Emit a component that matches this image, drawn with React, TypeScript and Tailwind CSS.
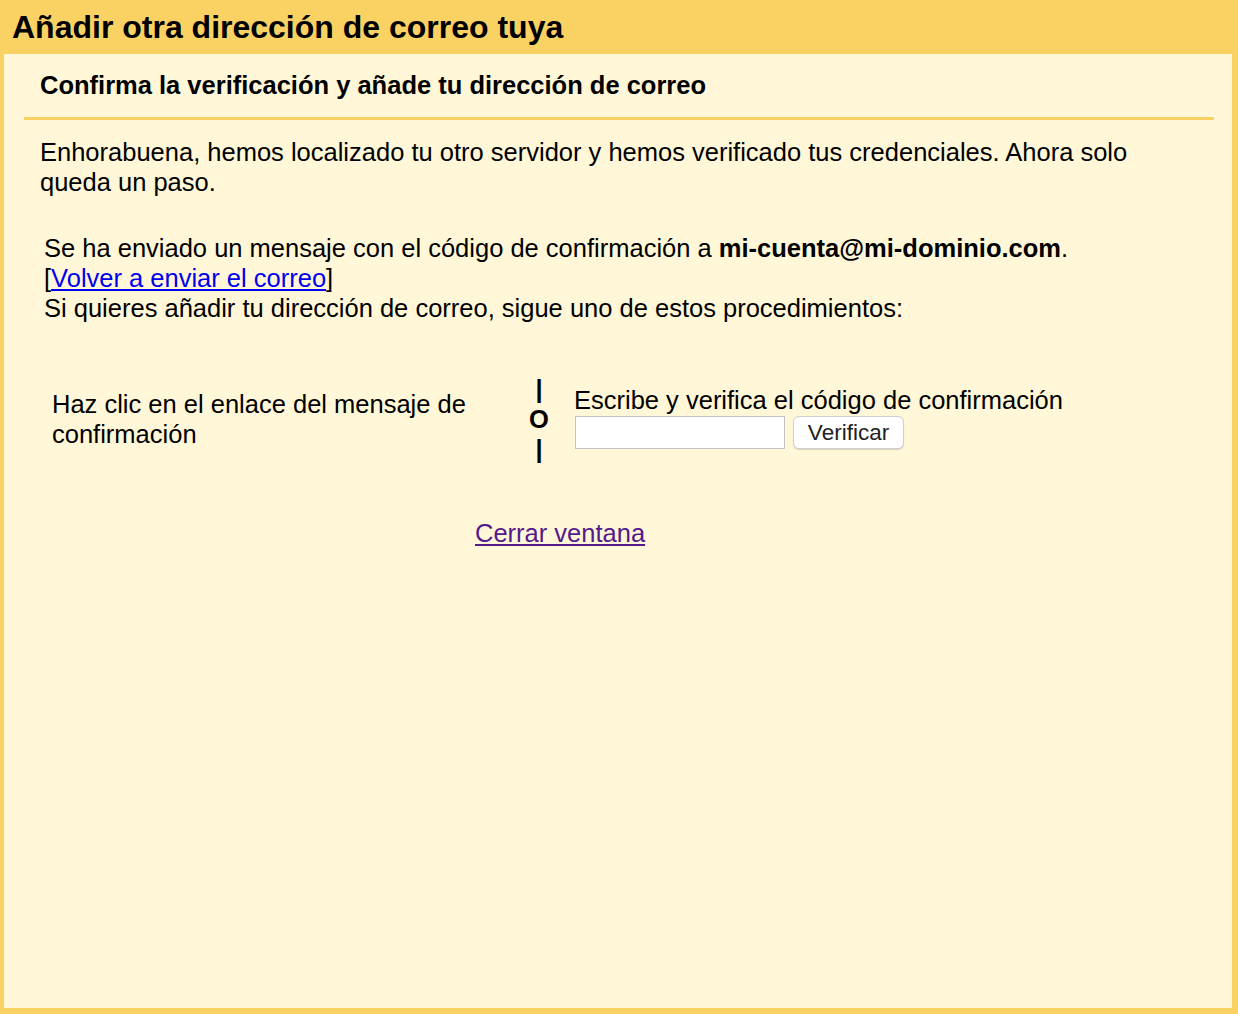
import React from "react";

export default function App() {
  return (
    <div className="h-[1014px] w-full bg-[#fad163] flex flex-col font-['Liberation_Sans',Arial,sans-serif] text-black overflow-hidden">
      <h1 className="h-[54px] shrink-0 pl-[12px] text-[32px] font-bold leading-[54px]">
        Añadir otra dirección de correo tuya
      </h1>
      <div className="flex-1 ml-[4px] mr-[6px] mb-[6px] bg-[#fff7d7] px-[20px]">
        <div className="pt-[16px] pb-[17px] pl-[16px] text-[25.5px] font-bold leading-[30px]">
          Confirma la verificación y añade tu dirección de correo
        </div>
        <div className="h-[3px] bg-[#fad163] mr-[-2px]"></div>
        <div className="pt-[17px] pl-[16px] pr-[40px] text-[25.5px] leading-[30px]">
          Enhorabuena, hemos localizado tu otro servidor y hemos verificado tus credenciales. Ahora solo queda un paso.
        </div>
        <div className="pt-[36px] pl-[20px] text-[25.5px] leading-[30px]">
          <div>
            Se ha enviado un mensaje con el código de confirmación a <b>mi-cuenta@mi-dominio.com</b>.
          </div>
          <div>
            [<a href="#" className="text-[#0000ee] underline">Volver a enviar el correo</a>]
          </div>
          <div>Si quieres añadir tu dirección de correo, sigue uno de estos procedimientos:</div>
        </div>
        <div className="mt-[51px] flex items-center text-[25.5px] leading-[30px]">
          <div className="w-[488px] pl-[28px] pr-[20px]">
            Haz clic en el enlace del mensaje de confirmación
          </div>
          <div className="w-[54px] flex flex-col items-center font-bold">
            <span>|</span>
            <span>O</span>
            <span>|</span>
          </div>
          <div className="pl-[8px] mb-[4px]">
            <div className="leading-[30px]">Escribe y verifica el código de confirmación</div>
            <div className="flex items-center gap-[8px] mt-[1px]">
              <input
                type="text"
                className="w-[210px] h-[33px] bg-white border border-[#c4c4c4] ml-[1px] outline-none"
              />
              <button className="w-[111px] h-[33px] rounded-[6px] border border-[#cfcfcf] bg-white shadow-[0_1px_1px_rgba(0,0,0,0.15)] text-[22.5px] leading-[30px] text-[#222]">
                Verificar
              </button>
            </div>
          </div>
        </div>
        <div className="mt-[54px] pl-[451px] text-[25.5px] leading-[30px]">
          <a href="#" className="text-[#551a8b] underline">Cerrar ventana</a>
        </div>
      </div>
    </div>
  );
}
